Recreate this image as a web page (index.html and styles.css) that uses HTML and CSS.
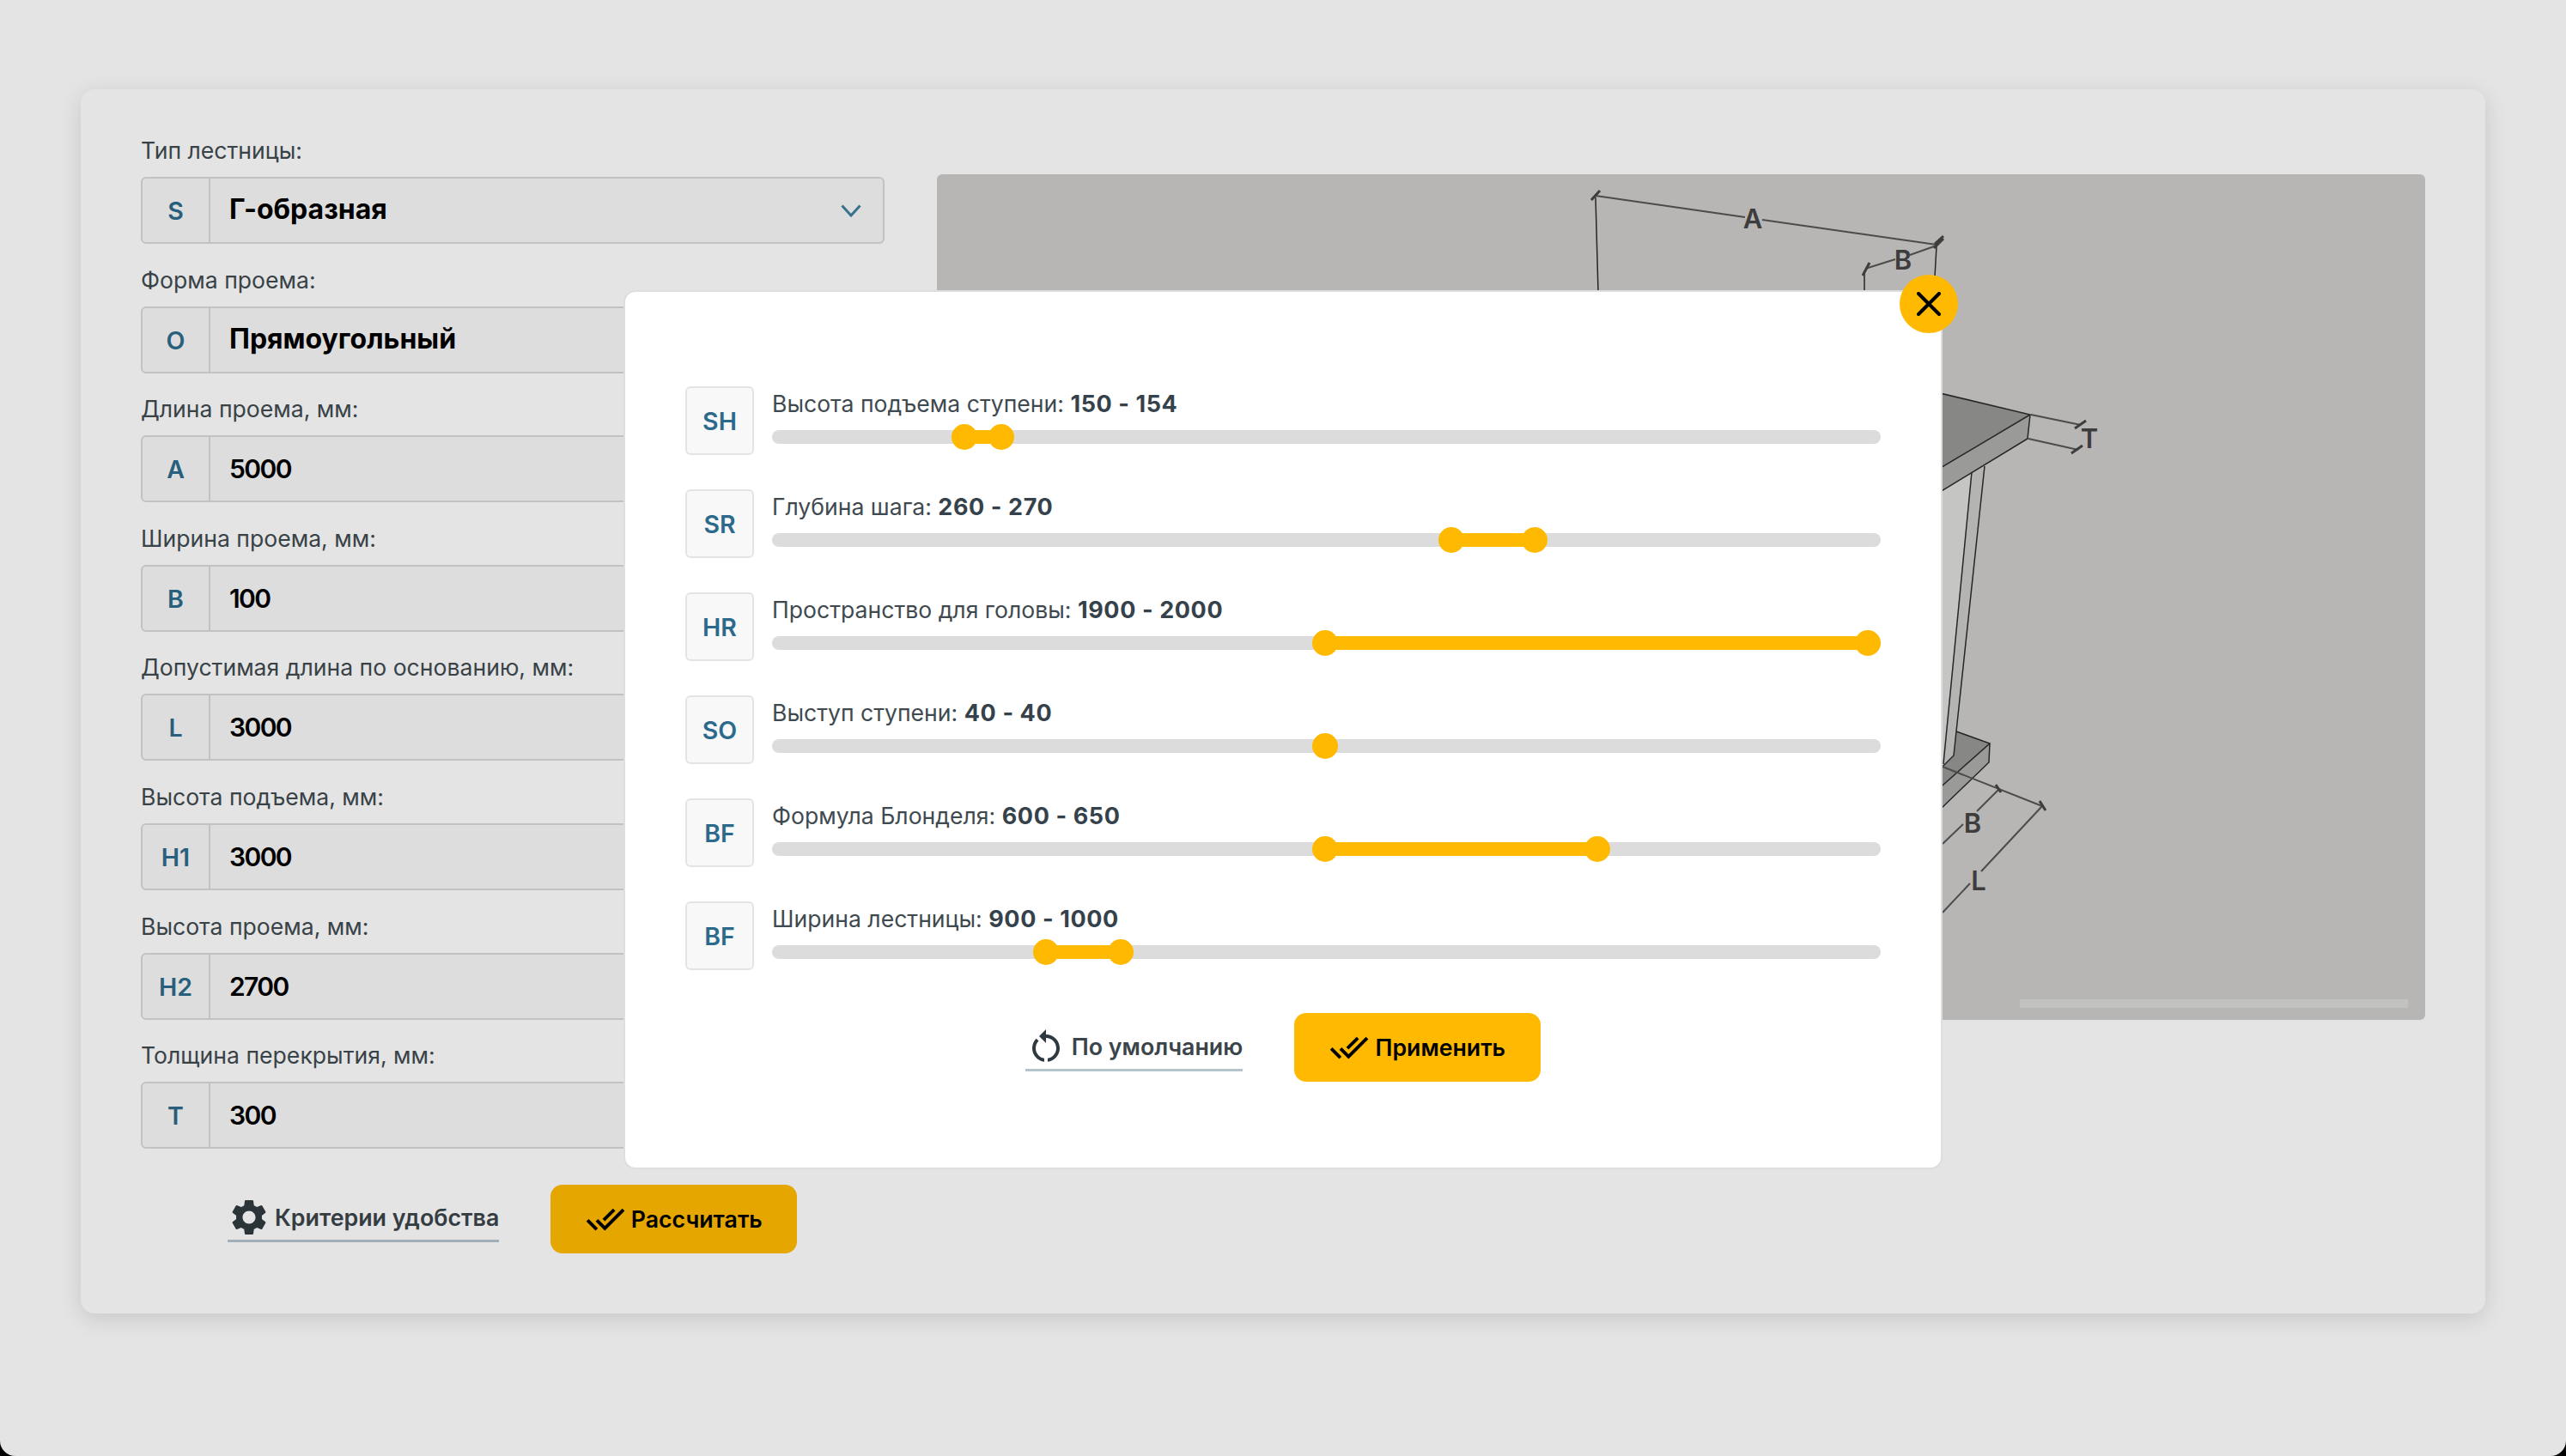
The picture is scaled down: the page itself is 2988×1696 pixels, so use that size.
FILE: index.html
```html
<!DOCTYPE html>
<html lang="ru">
<head>
  <meta charset="UTF-8" />
  <title>Калькулятор лестницы</title>
  <link rel="stylesheet" href="styles.css">
</head>
<body>
<div class="screen">
  <div class="card">
    <div class="form">
      <div class="field">
        <div class="field-label">Тип лестницы:</div>
        <div class="field-box">
          <div class="prefix">S</div>
          <div class="value">Г-образная</div>
          <svg class="chevron" viewBox="0 0 24 15"><path d="M1.5 1.5 12 13 22.5 1.5"/></svg>
        </div>
      </div>
      <div class="field">
        <div class="field-label">Форма проема:</div>
        <div class="field-box"><div class="prefix">O</div><div class="value">Прямоугольный</div></div>
      </div>
      <div class="field">
        <div class="field-label">Длина проема, мм:</div>
        <div class="field-box"><div class="prefix">A</div><div class="value value-num">5000</div></div>
      </div>
      <div class="field">
        <div class="field-label">Ширина проема, мм:</div>
        <div class="field-box"><div class="prefix">B</div><div class="value value-num">100</div></div>
      </div>
      <div class="field">
        <div class="field-label">Допустимая длина по основанию, мм:</div>
        <div class="field-box"><div class="prefix">L</div><div class="value value-num">3000</div></div>
      </div>
      <div class="field">
        <div class="field-label">Высота подъема, мм:</div>
        <div class="field-box"><div class="prefix">H1</div><div class="value value-num">3000</div></div>
      </div>
      <div class="field">
        <div class="field-label">Высота проема, мм:</div>
        <div class="field-box"><div class="prefix">H2</div><div class="value value-num">2700</div></div>
      </div>
      <div class="field">
        <div class="field-label">Толщина перекрытия, мм:</div>
        <div class="field-box"><div class="prefix">T</div><div class="value value-num">300</div></div>
      </div>

      <div class="form-actions">
        <a class="link-btn link-btn-gear">
          <svg class="icon-gear" viewBox="0 0 24 24"><path d="M19.14,12.94c0.04-0.3,0.06-0.61,0.06-0.94c0-0.32-0.02-0.64-0.07-0.94l2.03-1.58c0.18-0.14,0.23-0.41,0.12-0.61 l-1.92-3.32c-0.12-0.22-0.37-0.29-0.59-0.22l-2.39,0.96c-0.5-0.38-1.03-0.7-1.62-0.94L14.4,2.81c-0.04-0.24-0.24-0.41-0.48-0.41 h-3.84c-0.24,0-0.43,0.17-0.47,0.41L9.25,5.35C8.66,5.59,8.12,5.92,7.63,6.29L5.24,5.33c-0.22-0.08-0.47,0-0.59,0.22L2.74,8.87 C2.62,9.08,2.66,9.34,2.86,9.48l2.03,1.58C4.84,11.36,4.8,11.69,4.8,12s0.02,0.64,0.07,0.94l-2.03,1.58 c-0.18,0.14-0.23,0.41-0.12,0.61l1.92,3.32c0.12,0.22,0.37,0.29,0.59,0.22l2.39-0.96c0.5,0.38,1.03,0.7,1.62,0.94l0.36,2.54 c0.05,0.24,0.24,0.41,0.48,0.41h3.84c0.24,0,0.44-0.17,0.47-0.41l0.36-2.54c0.59-0.24,1.13-0.56,1.62-0.94l2.39,0.96 c0.22,0.08,0.47,0,0.59-0.22l1.92-3.32c0.12-0.22,0.07-0.47-0.12-0.61L19.14,12.94z M12,15.6c-1.98,0-3.6-1.62-3.6-3.6 s1.62-3.6,3.6-3.6s3.6,1.62,3.6,3.6S13.98,15.6,12,15.6z"/></svg>
          Критерии удобства
        </a>
        <button class="main-btn">
          <svg class="icon-check" viewBox="0 0 24 24"><path d="M18 7l-1.41-1.41-6.34 6.34 1.41 1.41L18 7zm4.24-1.41L11.66 16.17 7.48 12l-1.41 1.41L11.66 19l12-12-1.42-1.41zM.41 13.41L6 19l1.41-1.41L1.83 12 .41 13.41z"/></svg>
          Рассчитать
        </button>
      </div>
    </div>

    <div class="drawing">
      <!-- viewBox is in page pixels so the points read like the screenshot -->
      <svg class="drawing-svg" viewBox="1091 203 1733 985">
        <polygon class="wall" points="2200,610 2296,550 2263,890 2200,950"/>
        <polygon class="leg" points="2296,550 2311,543 2278,852 2275,880 2263,893 2263,890 2278,730"/>
        <polygon class="top-face" points="2100,420 2364,483 2100,640"/>
        <polygon class="front-face" points="2100,640 2364,483 2361,511 2100,670"/>
        <polygon class="top-face" points="2278,852 2317,866 2200,970 2200,950 2263,893 2275,880"/>
        <polygon class="front-face" points="2317,866 2316,888 2200,1000 2200,970"/>

        <g class="edge">
          <path d="M2100 420 2364 483 2100 640M2364 483 2361 511 2100 670"/>
          <path d="M2296 550 2263 890M2311 543 2278 852 2275 880 2262 893"/>
          <path d="M2278 852 2317 866 2200 970M2317 866 2316 888 2200 1000"/>
          <path d="M1858 230 1861 340M2171 315V340M2255 287 2253 322"/>
        </g>

        <g class="dim">
          <path d="M1858 228 2032 253M2052 256 2255 285"/>
          <path d="M2172 313 2207 302M2224 297 2255 286"/>
          <path d="M2365 483 2423 495M2362 511 2420 524"/>
          <path d="M2262 893 2378 939"/>
          <path d="M2327 920 2302 945M2286 960 2262 983"/>
          <path d="M2378 939 2307 1015M2294 1029 2262 1063"/>
        </g>
        <g class="tick">
          <path d="M1853 233 1863 222M2252 289 2263 278M2253 284 2263 275M2169 321 2177 306"/>
          <path d="M2416 499 2429 490M2412 528 2425 519"/>
          <path d="M2324 914 2330 923M2375 933 2382 944"/>
        </g>

        <text class="dim-text" x="2041" y="266">A</text>
        <text class="dim-text" x="2216" y="314">B</text>
        <text class="dim-text" x="2433" y="522">T</text>
        <text class="dim-text" x="2297" y="970">B</text>
        <text class="dim-text" x="2304" y="1037">L</text>
      </svg>
      <div class="drawing-scroll"></div>
    </div>
  </div>

  <div class="overlay">
    <div class="modal">
      <button class="modal-close">
        <svg viewBox="0 0 28 28"><path d="M2 2 26 26M26 2 2 26"/></svg>
      </button>

      <div class="range-row">
        <div class="badge">SH</div>
        <div class="range-col">
          <div class="range-label">Высота подъема ступени: <b>150 - 154</b></div>
          <div class="track"><div class="track-in">
            <div class="track-fill" style="left:16.6%;width:3.4%"></div>
            <div class="handle" style="left:16.6%"></div>
            <div class="handle" style="left:20%"></div>
          </div></div>
        </div>
      </div>
      <div class="range-row">
        <div class="badge">SR</div>
        <div class="range-col">
          <div class="range-label">Глубина шага: <b>260 - 270</b></div>
          <div class="track"><div class="track-in">
            <div class="track-fill" style="left:61.5%;width:7.7%"></div>
            <div class="handle" style="left:61.5%"></div>
            <div class="handle" style="left:69.2%"></div>
          </div></div>
        </div>
      </div>
      <div class="range-row">
        <div class="badge">HR</div>
        <div class="range-col">
          <div class="range-label">Пространство для головы: <b>1900 - 2000</b></div>
          <div class="track"><div class="track-in">
            <div class="track-fill" style="left:49.9%;width:50.1%"></div>
            <div class="handle" style="left:49.9%"></div>
            <div class="handle" style="left:100%"></div>
          </div></div>
        </div>
      </div>
      <div class="range-row">
        <div class="badge">SO</div>
        <div class="range-col">
          <div class="range-label">Выступ ступени: <b>40 - 40</b></div>
          <div class="track"><div class="track-in">
            <div class="handle" style="left:49.9%"></div>
          </div></div>
        </div>
      </div>
      <div class="range-row">
        <div class="badge">BF</div>
        <div class="range-col">
          <div class="range-label">Формула Блонделя: <b>600 - 650</b></div>
          <div class="track"><div class="track-in">
            <div class="track-fill" style="left:49.9%;width:25.1%"></div>
            <div class="handle" style="left:49.9%"></div>
            <div class="handle" style="left:75%"></div>
          </div></div>
        </div>
      </div>
      <div class="range-row">
        <div class="badge">BF</div>
        <div class="range-col">
          <div class="range-label">Ширина лестницы: <b>900 - 1000</b></div>
          <div class="track"><div class="track-in">
            <div class="track-fill" style="left:24.1%;width:6.9%"></div>
            <div class="handle" style="left:24.1%"></div>
            <div class="handle" style="left:31%"></div>
          </div></div>
        </div>
      </div>

      <div class="modal-actions">
        <a class="link-btn link-btn-reset">
          <svg class="icon-reset" viewBox="0 0 24 24"><path d="M12 5V2L8 6l4 4V7c3.31 0 6 2.69 6 6 0 2.97-2.17 5.43-5 5.91v2.02c3.95-.49 7-3.85 7-7.93 0-4.42-3.58-8-8-8zM6 13c0-1.65.67-3.15 1.76-4.24L6.34 7.34C4.9 8.79 4 10.79 4 13c0 4.08 3.05 7.44 7 7.93v-2.02c-2.83-.48-5-2.94-5-5.91z"/></svg>
          По умолчанию
        </a>
        <button class="main-btn">
          <svg class="icon-check" viewBox="0 0 24 24"><path d="M18 7l-1.41-1.41-6.34 6.34 1.41 1.41L18 7zm4.24-1.41L11.66 16.17 7.48 12l-1.41 1.41L11.66 19l12-12-1.42-1.41zM.41 13.41L6 19l1.41-1.41L1.83 12 .41 13.41z"/></svg>
          Применить
        </button>
      </div>
    </div>
  </div>
</div>
</body>
</html>
```

FILE: styles.css
```css
* {
  box-sizing: border-box;
}
html, body {
  margin: 0;
  height: 100%;
  background: #000;
}
body {
  font-family: Inter, "Noto Sans", sans-serif;
  color: #3f4a50;
}
.screen {
  position: relative;
  width: 2988px;
  height: 1696px;
  padding: 104px 94px 0;
  background: #fefefe;
  border-radius: 0 0 18px 18px;
  overflow: hidden;
}

/* main card */
.card {
  display: flex;
  gap: 61px;
  height: 1426px;
  padding: 49px 70px 0 70px;
  background: #fefefe;
  border-radius: 16px;
  box-shadow: 0 6px 26px rgba(0, 0, 0, 0.13);
}
.form {
  flex: 0 0 866px;
}
.field {
  height: 150.6px;
}
.field-label {
  height: 46px;
  margin-bottom: 7px;
  font-size: 26.6px;
  line-height: 44px;
}
.field-box {
  display: flex;
  align-items: center;
  height: 78px;
  background: #f7f7f7;
  border: 2px solid #d8d8d8;
  border-radius: 6px;
}
.prefix {
  flex: 0 0 79px;
  height: 100%;
  border-right: 2px solid #d8d8d8;
  color: #2c6a8c;
  font-size: 28.5px;
  font-weight: 600;
  line-height: 75px;
  text-align: center;
}
.value {
  flex: 1;
  padding: 0 0 3px 22px;
  color: #000;
  font-size: 32px;
  font-weight: 700;
}
.value-num {
  padding-bottom: 0;
  font-size: 30px;
  font-weight: 600;
  letter-spacing: -1.6px;
}
.chevron {
  width: 24px;
  height: 15px;
  margin-right: 25px;
  fill: none;
  stroke: #3f7f9f;
  stroke-width: 3;
}

.form-actions {
  display: flex;
  align-items: center;
  gap: 60px;
  margin-top: 22px;
  padding-left: 101px;
}
.link-btn {
  display: inline-flex;
  align-items: center;
  height: 55px;
  border-bottom: 3px solid #b5c3cd;
  color: #3a4449;
  font-size: 26.8px;
  font-weight: 600;
}
.link-btn svg {
  fill: #2f3a40;
}
.icon-gear {
  width: 50px;
  height: 50px;
  margin-right: 5px;
}
.icon-reset {
  width: 48px;
  height: 48px;
  margin-right: 6px;
}
.main-btn {
  display: flex;
  align-items: center;
  justify-content: center;
  width: 287px;
  height: 80px;
  padding: 0;
  background: #ffb900;
  border: none;
  border-radius: 14px;
  color: #000;
  font-family: inherit;
  font-size: 26.7px;
  font-weight: 600;
}
.icon-check {
  width: 46px;
  height: 46px;
  margin-right: 7px;
}

/* drawing on the right */
.drawing {
  position: relative;
  flex: 0 0 1733px;
  height: 985px;
  margin-top: 50px;
  background: #cccbc9;
  border-radius: 6px;
  overflow: hidden;
}
.drawing-svg {
  display: block;
  width: 1733px;
  height: 985px;
}
.wall {
  fill: #dcdcda;
}
.leg {
  fill: #c9c9c7;
}
.top-face {
  fill: #979795;
}
.front-face {
  fill: #acacaa;
}
.edge path {
  fill: none;
  stroke: #2b2b2b;
  stroke-width: 1.5;
}
.dim path {
  fill: none;
  stroke: #555;
  stroke-width: 2;
}
.tick path {
  fill: none;
  stroke: #444;
  stroke-width: 3;
}
.dim-text {
  fill: #444;
  font-size: 31px;
  font-weight: 600;
  text-anchor: middle;
}
.drawing-scroll {
  position: absolute;
  right: 20px;
  bottom: 14px;
  width: 452px;
  height: 10px;
  background: #d9d9d7;
}

/* modal */
.overlay {
  position: absolute;
  inset: 0;
  background: rgba(0, 0, 0, 0.1);
}
.modal {
  position: absolute;
  left: 726px;
  top: 338px;
  width: 1536px;
  height: 1024px;
  padding: 110px 70px 0;
  background: #fff;
  border: 2px solid #dedede;
  border-radius: 14px;
}
.modal-close {
  position: absolute;
  right: -20px;
  top: -20px;
  width: 68px;
  height: 68px;
  padding: 20px;
  background: #ffb900;
  border: none;
  border-radius: 50%;
}
.modal-close svg {
  display: block;
  width: 28px;
  height: 28px;
  fill: none;
  stroke: #000;
  stroke-width: 4;
  stroke-linecap: round;
}
.range-row {
  display: flex;
  gap: 21px;
  height: 80px;
  margin-bottom: 40px;
}
.badge {
  flex: 0 0 80px;
  height: 80px;
  background: #f8f8f8;
  border: 2px solid #e4e4e4;
  border-radius: 6px;
  color: #2c6a8c;
  font-size: 28.5px;
  font-weight: 600;
  line-height: 77px;
  text-align: center;
}
.range-col {
  flex: 1;
}
.range-label {
  height: 42px;
  margin-bottom: 9px;
  color: #3f4a50;
  font-size: 26.6px;
  line-height: 41px;
}
.range-label b {
  font-size: 27px;
  font-weight: 700;
  letter-spacing: 0.6px;
  color: #36424b;
}
.track {
  position: relative;
  height: 16px;
  background: #dcdcdc;
  border-radius: 8px;
}
.track-in {
  position: absolute;
  left: 15px;
  right: 15px;
  top: 0;
  bottom: 0;
}
.track-fill {
  position: absolute;
  top: 0;
  bottom: 0;
  background: #ffb900;
}
.handle {
  position: absolute;
  top: -7px;
  width: 30px;
  height: 30px;
  margin-left: -15px;
  background: #ffb900;
  border-radius: 50%;
}
.modal-actions {
  display: flex;
  align-items: center;
  justify-content: center;
  gap: 60px;
  margin-top: 50px;
}
```
